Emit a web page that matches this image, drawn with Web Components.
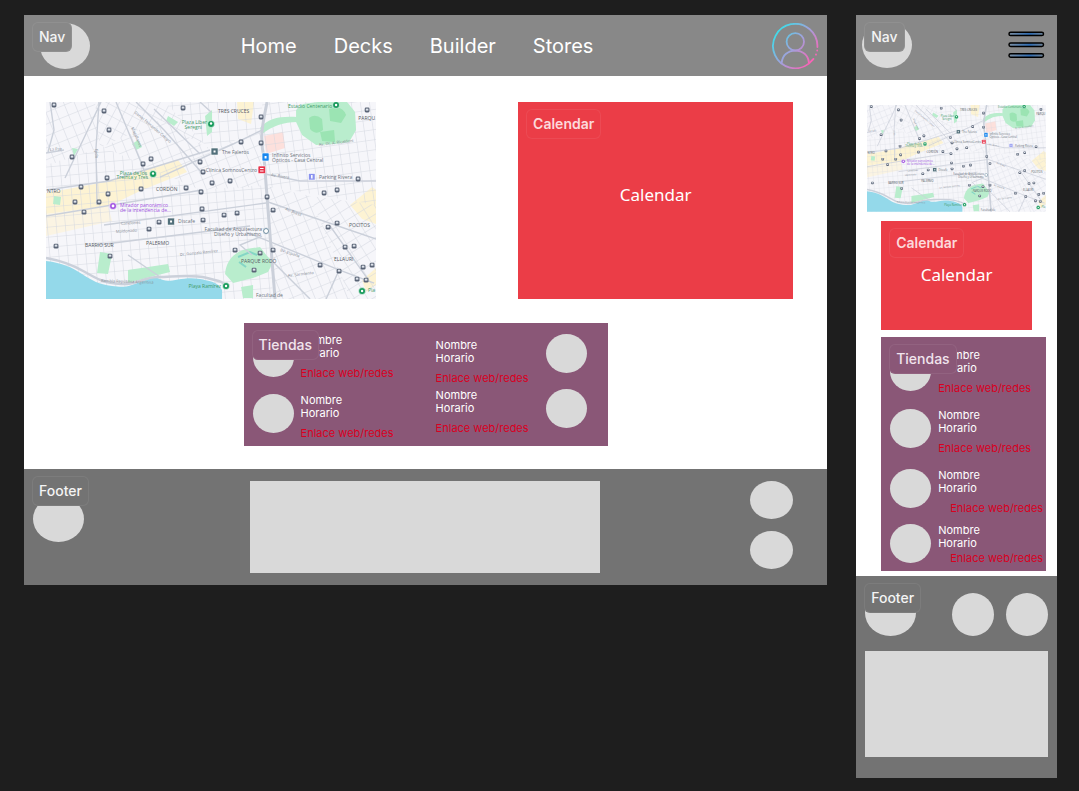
<!DOCTYPE html>
<html lang="es">
<head>
<meta charset="utf-8">
<meta name="viewport" content="width=device-width, initial-scale=1">
<title>Stores wireframes</title>
<style>
  body {
    margin: 0;
    padding: 15px 22px 14px 24px;
    background: #1e1e1e;
    color: #fff;
    font-family: Inter, "Liberation Sans", sans-serif;
    display: grid;
    grid-template-columns: minmax(0, 4fr) minmax(0, 1fr);
    gap: 29px;
    align-items: start;
  }
</style>
</head>
<body>
<wire-board>
  <wire-nav slot="nav"></wire-nav>
  <street-map slot="map"></street-map>
  <event-calendar slot="calendar"></event-calendar>
  <store-panel slot="stores">
    <store-item slot="first" place="center"></store-item>
    <store-item slot="first"></store-item>
    <store-item slot="second" reverse place="end"></store-item>
    <store-item slot="second" reverse></store-item>
  </store-panel>
  <wire-footer slot="footer"></wire-footer>
</wire-board>
<wire-board compact>
  <wire-nav slot="nav" compact></wire-nav>
  <street-map slot="map"></street-map>
  <event-calendar slot="calendar" compact></event-calendar>
  <store-panel slot="stores" compact>
    <store-item slot="first" place="center"></store-item>
    <store-item slot="first"></store-item>
    <store-item slot="first" indent></store-item>
    <store-item slot="first" indent tight></store-item>
  </store-panel>
  <wire-footer slot="footer" compact></wire-footer>
</wire-board>

<script>
const define = (name, html) => customElements.define(name, class extends HTMLElement {
  constructor() {
    super();
    this.attachShadow({ mode: 'open' }).innerHTML =
      typeof html === 'function' ? html(this) : html;
  }
});

define('wire-board', `
<style>
  :host { display: block; background: #fff; }
  .top {
    display: grid;
    grid-template-columns: minmax(0, 330fr) minmax(0, 275fr);
    gap: 142px;
    padding: 26px 34px 0 22px;
  }
  .stores { display: flex; justify-content: center; padding: 24px 0 23px; }
  :host([compact]) .top { display: block; padding: 25px 11px 0; }
  :host([compact]) .stores { display: block; padding: 7px 11px 5px 25px; }
</style>
<slot name="nav"></slot>
<main>
  <div class="top"><slot name="map"></slot><slot name="calendar"></slot></div>
  <div class="stores"><slot name="stores"></slot></div>
</main>
<slot name="footer"></slot>`);

define('wire-tag', `
<style>
  :host {
    position: absolute; left: 8px; top: 7px; z-index: 1;
    box-sizing: border-box; height: 30px; padding: 0 6px;
    border: 1px solid rgba(255, 255, 255, .07); border-radius: 6px;
    background: var(--surface); color: #f4f4f4;
    font-size: 14px; line-height: 28px; font-weight: 500;
  }
</style>
<slot></slot>`);

define('wire-nav', el => {
  const compact = el.hasAttribute('compact');
  return `
<style>
  :host { display: block; position: relative; background: #888; --surface: #888; }
  header {
    display: grid; grid-template-columns: 8fr auto 9fr; align-items: center;
    min-height: 61px; padding: 0 8px 0 16px;
  }
  .logo { width: 50px; height: 46px; border-radius: 50%; background: #d9d9d9; }
  nav { display: flex; gap: 37px; }
  a { color: #fff; text-decoration: none; font-size: 20px; line-height: 24px; }
  button { border: 0; padding: 0; background: none; display: block; justify-self: end; }
  svg { display: block; }
  :host([compact]) header { grid-template-columns: 1fr auto; min-height: 65px; padding: 0 12px 0 6px; }
  :host([compact]) .logo { margin-bottom: 5px; }
  :host([compact]) button { margin-bottom: 6px; }
</style>
<wire-tag>Nav</wire-tag>
<header>
  <div class="logo"></div>
  ${compact ? `
  <button aria-label="Menu"><svg width="37" height="28" viewBox="0 0 37 28">
    <defs><linearGradient id="bar"><stop offset="0" stop-color="#7c8fa3"/><stop offset=".6" stop-color="#2f6db4"/><stop offset="1" stop-color="#6f8193"/></linearGradient></defs>
    <g fill="url(#bar)" stroke="#000" stroke-width="1.500">
      <rect x="1" y="1.200" width="34.500" height="3.400" rx="1.700"/>
      <rect x="1" y="12" width="34.500" height="3.400" rx="1.700"/>
      <rect x="1" y="22.800" width="34.500" height="3.400" rx="1.700"/>
    </g></svg></button>` : `
  <nav>
    <a href="#home">Home</a><a href="#decks">Decks</a><a href="#builder">Builder</a><a href="#stores">Stores</a>
  </nav>
  <button aria-label="Account"><svg width="47" height="46" viewBox="0 0 47 46">
    <defs><linearGradient id="ring" gradientUnits="userSpaceOnUse" x1="4" y1="10" x2="40" y2="40"><stop offset="0" stop-color="#3fdcea"/><stop offset=".5" stop-color="#a3a0dc"/><stop offset="1" stop-color="#ff5fb4"/></linearGradient></defs>
    <g fill="none" stroke="url(#ring)" stroke-width="1.800" stroke-linecap="round">
      <path d="M45.400 24A22.200 22.200 0 1 0 36.800 40.600L41.400 36"/>
      <path d="M45.200 27.400v.2M44 31.500v.2"/>
      <circle cx="23.300" cy="18.800" r="8.700"/>
      <path d="M9.800 39.400C10.500 32 16 27.600 23.300 27.600S36.300 32 36.800 39.400"/>
    </g></svg></button>`}
</header>`;
});

const buses = [[54,105],[104,111],[109,130],[183,108],[72,157],[151,159],[143,164],[107,178],[81,187],[141,189],[108,194],[75,202],[99,202],[186,188],[200,162],[203,172],[201,192],[367,110],[261,117],[261,143],[241,142],[212,183],[230,181],[267,197],[324,193],[337,190],[358,179],[84,212],[56,246],[110,256],[159,222],[149,229],[202,209],[203,220],[224,215],[237,213],[273,210],[328,227],[337,223],[345,247],[354,246],[235,250],[260,253],[273,250],[254,270],[320,265],[339,271],[363,267],[372,265],[357,279],[366,280]]
  .map(([x, y]) => `<use href="#bus" x="${x}" y="${y}"/>`).join('');

const label = (x, y, text, cls = '', rotate = 0) =>
  `<text x="${x}" y="${y}" class="${cls}"${rotate ? ` transform="rotate(${rotate} ${x} ${y})"` : ''}>${text}</text>`;

const grid = (id, size, angle) =>
  `<pattern id="${id}" width="${size}" height="${size + 1}" patternUnits="userSpaceOnUse" patternTransform="rotate(${angle})"><path d="M0 0H${size}M0 0V${size + 1}" fill="none" stroke="#d3d7e0" stroke-width="1"/></pattern>`;

define('street-map', `
<style>
  :host { display: block; }
  svg { display: block; width: 100%; height: auto; }
  text { font: 5px "Open Sans", Roboto, sans-serif; fill: #6d737c; }
  .area { fill: #555a63; }
  .green { fill: #3f9a68; }
  .purple { fill: #a052e0; }
  .end { text-anchor: end; }
  .road { font-size: 4px; fill: #858b94; }
</style>
<svg viewBox="46 102 330 197" role="img" aria-label="Mapa">
  <defs>
    ${grid('flat', 9, -5)}${grid('lean', 10, -22)}${grid('steep', 9, 28)}${grid('slant', 10, 58)}${grid('east', 9, -8)}
    <g id="bus"><rect x="-2.400" y="-2.400" width="4.800" height="4.800" rx="1.300" fill="#5a6476"/><rect x="-1.300" y="-1.400" width="2.600" height="2" fill="#dfe4ec"/></g>
  </defs>
  <rect x="46" y="102" width="330" height="197" fill="#f6f6fa"/>
  <path fill="#fdf3d3" d="M46 193L100 183L160 166L178 160L187 172L140 191L109 206L46 214ZM237 102H254L251 124L238 119ZM350 205L372 187L376 190V224L362 219ZM362 280L376 268V285L366 292Z"/>
  <path fill="#fbf4e3" d="M46 214L108 206L112 221L46 236Z"/>
  <path fill="#fde0dc" d="M264 136L283 132L285 148L266 154Z"/>
  <path fill="url(#flat)" d="M46 165L103 147L200 190L266 185L273 299H46Z"/>
  <path fill="url(#lean)" d="M46 102H95L100 148L46 166ZM103 147L160 120L210 150L262 130L266 186L200 190Z"/>
  <path fill="url(#steep)" d="M95 102H165L210 150L160 120L100 148Z"/>
  <path fill="url(#flat)" d="M165 102H262V130L210 150Z"/>
  <path fill="url(#east)" d="M262 102H376V205L266 186Z"/>
  <path fill="url(#slant)" d="M310 196L376 205V299H350L330 245Z"/>
  <path fill="url(#lean)" d="M266 186L310 196L330 245L350 299H273Z"/>
  <g fill="#b9edcd">
    <path d="M296 110L303 104L318 102H347L355 112L356 130L349 142L334 144L316 145L302 135L296 122Z"/>
    <path d="M260 128C268 118 280 116 297 117V122C284 122 272 126 262 134Z"/>
    <path d="M225 274C226 261 234 252 246 249L260 247L267 256L273 262L268 272L253 278L233 283Z"/>
    <path d="M100 252L112 254L108 274L97 273ZM128 270L168 264L170 272L150 277L128 283ZM132 144L138 140L142 147L136 150ZM205 116L212 110V132L207 136ZM54 196L61 197L60 205L53 204ZM168 116L178 122L174 126L166 121ZM241 287L253 285V298H243ZM72 148L78 149L74 156Z"/>
  </g>
  <path fill="#9be4b3" d="M309 118Q315 113 322 119L323 130Q316 136 310 129ZM329 109Q342 104 346 115L341 123L330 121ZM320 132L334 130L335 142L322 141Z"/>
  <path fill="none" stroke="#84d6c5" stroke-width="2" d="M238 257L250 252L257 255M239 262L246 267"/>
  <path fill="#94d9ea" d="M46 261C63 263 71 267 82 274S98 284 112 286S130 286 142 281S155 277 163 280S183 276 200 279S219 285 222 290V299H46Z"/>
  <g fill="none" stroke="#cbd0da" stroke-width="1.400">
    <path stroke-width="2.500" d="M46 258C63 261 73 265 85 272S104 283 121 284S143 277 158 277S190 274 207 278S222 282 226 286"/>
    <path stroke-width="3" d="M267 102C263 123 259 136 264 158L268 210L275 299"/>
    <path d="M101 102L65 178M116 102L140 160L147 178M136 102L164 130L202 173M154 109L200 154M200 102L211 112M262 130L233 144L160 177M46 153L64 150M50 102L54 130L48 152M99 102L96 148L97 205"/>
    <path d="M265 174L300 181H376M268 202L376 239M246 232L337 269L374 283M330 226L367 278M273 262L310 299M128 255L160 277M46 190L109 181L210 150M339 270L326 299M262 236L240 245L252 255M46 216L202 190M104 225L266 203M97 245L250 226"/>
  </g>
  ${buses}
  ${label(218, 113, 'TRES CRUCES', 'area')}
  ${label(207, 124, 'Plaza Líber', 'green end')}${label(202, 129, 'Seregni', 'green end')}
  ${label(288, 108, 'Estadio Centenario', 'green')}
  ${label(375, 120, 'PARQU', 'area end')}
  ${label(222, 154, 'The Faleros')}
  ${label(272, 157, 'Infinito Servicios')}${label(272, 162, 'Ópticos - Casa Central')}
  ${label(257, 172, 'Clínica SomnosCentro', 'end')}
  ${label(319, 179, 'Parking Rivera')}
  ${label(147, 175, 'Plaza de los', 'green end')}${label(148, 179, 'Treinta y Tres', 'green end')}
  ${label(156, 191, 'CORDÓN', 'area')}
  ${label(120, 207, 'Mirador panorámico', 'purple')}${label(120, 212, 'de la intendencia de…', 'purple')}
  ${label(47, 193, 'NTRO', 'area')}
  ${label(178, 223, 'Discafe')}
  ${label(85, 247, 'BARRIO SUR', 'area')}
  ${label(146, 245, 'PALERMO', 'area')}
  ${label(262, 231, 'Facultad de Arquitectura', 'end')}${label(261, 236, 'Diseño y Urbanismo', 'end')}
  ${label(241, 263, 'PARQUE RODÓ', 'area')}
  ${label(334, 261, 'ELLAURI', 'area')}
  ${label(349, 227, 'POCITOS', 'area')}
  ${label(221, 288, 'Playa Ramírez', 'green end')}
  ${label(256, 297, 'Facultad de')}
  ${label(375, 292, 'Pla', 'green end')}
  ${label(50, 151, 'La Paz', 'road', -5)}
  ${label(131, 128, 'Magallanes', 'road', 66)}
  ${label(134, 113, 'Daniel Fernández Crespo', 'road', 40)}
  ${label(95, 149, 'Ejido', 'road', 88)}
  ${label(121, 225, 'Canelones', 'road', -4)}
  ${label(116, 233, 'Maldonado', 'road', -4)}
  ${label(180, 256, 'Dr. Gonzalo Ramírez', 'road', -6)}
  ${label(101, 282, 'Rambla República Argentina', 'road', 2)}
  ${label(271, 176, 'Av. Rivera', 'road', 9)}
  ${label(285, 210, 'Av. Brasil', 'road', 22)}
  ${label(280, 251, 'Bv. España', 'road', 19)}
  ${label(319, 146, 'Av. Dr. A. Ricaldoni', 'road', -7)}
  ${label(288, 277, 'Av. Sarmiento', 'road', -7)}
  <g stroke="#fff" stroke-width=".6">
    <g fill="#179a5b"><circle cx="211" cy="124" r="3.500"/><circle cx="153" cy="174" r="3.500"/><circle cx="336" cy="105" r="3.500"/><circle cx="226" cy="286" r="3.500"/><circle cx="362" cy="291" r="3.500"/></g>
    <circle cx="113" cy="206" r="3.500" fill="#a052e0"/>
    <circle cx="266" cy="231" r="3.200" fill="#5f7f96"/>
    <rect x="211" y="148" width="7" height="7" fill="#52707b"/><rect x="167.500" y="218" width="7" height="7" fill="#52707b"/>
    <rect x="262" y="153" width="7" height="8" rx="1" fill="#1a87ee"/>
    <rect x="258" y="166" width="7.500" height="7.500" rx="1" fill="#e8334a"/>
    <rect x="308.500" y="173.500" width="6.500" height="6.500" fill="#8a92ef"/>
  </g>
  <g fill="#fff"><circle cx="211" cy="123.500" r="1.200"/><circle cx="153" cy="173.500" r="1.200"/><circle cx="336" cy="105" r="1.200"/><circle cx="226" cy="286" r="1.200"/><circle cx="362" cy="291" r="1.200"/><circle cx="113" cy="206" r="1.400"/><circle cx="266" cy="231" r="2"/><path d="M213.500 150.500h2v2h-2zM170 220.500h2v2h-2zM264.500 156h2v2.500h-2zM260 168h3.500v1h-3.500zM260 170.500h3.500v1h-3.500zM311 175h1.500v3.500h-1.500z"/></g>
</svg>`);

define('event-calendar', `
<style>
  :host { display: grid; position: relative; background: #eb3d47; --surface: #eb3d47; }
  h2 {
    place-self: center; margin: 0; padding-bottom: 12px;
    font: 400 17px/24px "Noto Sans", sans-serif;
  }
  wire-tag { color: #fcd9db; font-weight: 600; }
  :host([compact]) { margin: 9px 14px 0; min-height: 109px; }
  :host([compact]) h2 { padding: 0; }
</style>
<wire-tag>Calendar</wire-tag>
<h2>Calendar</h2>`);

define('store-item', `
<style>
  :host { display: flex; gap: 7px; align-items: flex-start; }
  :host([place="center"]) { align-items: center; }
  :host([reverse]) { flex-direction: row-reverse; justify-content: flex-end; gap: 17px; }
  :host([place="end"]) .info { padding-top: 5px; }
  .avatar { flex: none; width: 41px; height: 39px; border-radius: 50%; background: #d9d9d9; }
  .info { font-size: 11px; line-height: 13px; white-space: nowrap; }
  p { margin: 0; }
  a { display: block; margin-top: 7px; color: #d9001f; text-decoration: none; }
  :host([indent]) a { margin-left: 12px; }
  :host([tight]) { margin-top: -5px; }
  :host([tight]) a { margin-top: 2px; }
</style>
<div class="avatar"></div>
<div class="info">
  <p>Nombre</p>
  <p>Horario</p>
  <a href="#web">Enlace web/redes</a>
</div>`);

define('store-panel', `
<style>
  :host {
    display: flex; justify-content: space-between; position: relative;
    box-sizing: border-box; width: 364px; padding: 11px 21px 6px 9px;
    background: #8a5777; --surface: #8a5777;
  }
  .column { display: flex; flex-direction: column; gap: 14px; }
  .column + .column { gap: 4px; }
  wire-tag { color: #f1e4ed; }
  :host([compact]) { width: auto; padding: 12px 0 6px 9px; }
  :host([compact]) .column + .column { display: none; }
</style>
<wire-tag>Tiendas</wire-tag>
<div class="column"><slot name="first"></slot></div>
<div class="column"><slot name="second"></slot></div>`);

define('wire-footer', `
<style>
  :host { display: block; position: relative; background: #737373; --surface: #737373; }
  footer {
    display: grid; grid-template-columns: 217fr 351fr 193fr;
    padding: 12px 34px 12px 9px;
  }
  .logo { width: 51px; height: 46px; margin-top: 15px; border-radius: 50%; background: #d9d9d9; }
  .block { height: 92px; background: #d9d9d9; }
  .dots { display: flex; flex-direction: column; align-items: flex-end; gap: 12px; }
  .dots i { width: 43px; height: 38px; border-radius: 50%; background: #d9d9d9; }
  :host([compact]) footer { grid-template-columns: 1fr auto; row-gap: 15px; padding: 17px 9px 21px; }
  :host([compact]) .logo { margin-top: -3px; align-self: end; }
  :host([compact]) .block { grid-row: 2; grid-column: 1 / 3; height: 106px; }
  :host([compact]) .dots { flex-direction: row; }
  :host([compact]) .dots i { width: 42px; height: 43px; }
</style>
<wire-tag>Footer</wire-tag>
<footer>
  <div class="logo"></div>
  <div class="block"></div>
  <div class="dots"><i></i><i></i></div>
</footer>`);
</script>
</body>
</html>
